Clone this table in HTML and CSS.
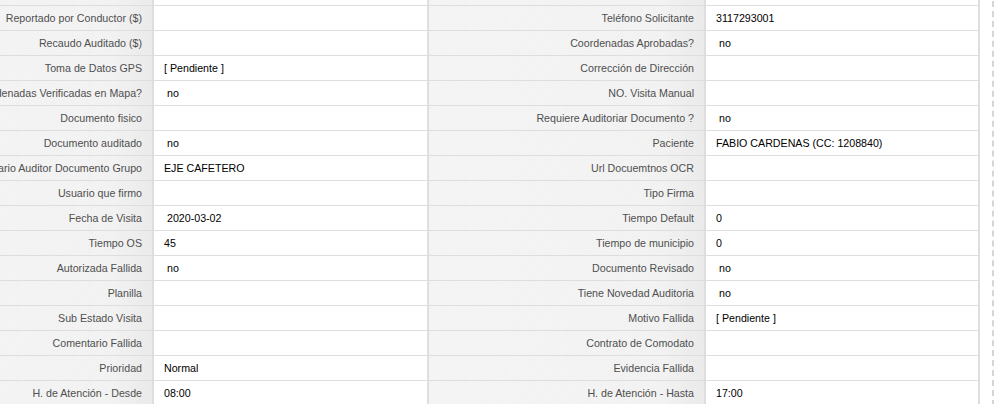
FILE: index.html
```html
<!DOCTYPE html>
<html lang="es">
<head>
<meta charset="utf-8">
<title>Detalle Visita</title>
<link rel="stylesheet" href="styles.css">
</head>
<body>
<div class="panel">
  <table class="detail">
    <colgroup>
      <col class="c1"><col class="c2"><col class="c3"><col class="c4">
    </colgroup>
    <tbody>
      <tr><td class="lbl"></td><td class="val"></td><td class="lbl"></td><td class="val"></td></tr>
      <tr><td class="lbl">Reportado por Conductor ($)</td><td class="val"></td><td class="lbl">Teléfono Solicitante</td><td class="val">3117293001</td></tr>
      <tr><td class="lbl">Recaudo Auditado ($)</td><td class="val"></td><td class="lbl">Coordenadas Aprobadas?</td><td class="val">&nbsp;no</td></tr>
      <tr><td class="lbl">Toma de Datos GPS</td><td class="val">[ Pendiente ]</td><td class="lbl">Corrección de Dirección</td><td class="val"></td></tr>
      <tr><td class="lbl">Coordenadas Verificadas en Mapa?</td><td class="val">&nbsp;no</td><td class="lbl">NO. Visita Manual</td><td class="val"></td></tr>
      <tr><td class="lbl">Documento fisico</td><td class="val"></td><td class="lbl">Requiere Auditoriar Documento ?</td><td class="val">&nbsp;no</td></tr>
      <tr><td class="lbl">Documento auditado</td><td class="val">&nbsp;no</td><td class="lbl">Paciente</td><td class="val">FABIO CARDENAS (CC: 1208840)</td></tr>
      <tr><td class="lbl">Usuario Auditor Documento Grupo</td><td class="val">EJE CAFETERO</td><td class="lbl">Url Docuemtnos OCR</td><td class="val"></td></tr>
      <tr><td class="lbl">Usuario que firmo</td><td class="val"></td><td class="lbl">Tipo Firma</td><td class="val"></td></tr>
      <tr><td class="lbl">Fecha de Visita</td><td class="val">&nbsp;2020-03-02</td><td class="lbl">Tiempo Default</td><td class="val">0</td></tr>
      <tr><td class="lbl">Tiempo OS</td><td class="val">45</td><td class="lbl">Tiempo de municipio</td><td class="val">0</td></tr>
      <tr><td class="lbl">Autorizada Fallida</td><td class="val">&nbsp;no</td><td class="lbl">Documento Revisado</td><td class="val">&nbsp;no</td></tr>
      <tr><td class="lbl">Planilla</td><td class="val"></td><td class="lbl">Tiene Novedad Auditoria</td><td class="val">&nbsp;no</td></tr>
      <tr><td class="lbl">Sub Estado Visita</td><td class="val"></td><td class="lbl">Motivo Fallida</td><td class="val">[ Pendiente ]</td></tr>
      <tr><td class="lbl">Comentario Fallida</td><td class="val"></td><td class="lbl">Contrato de Comodato</td><td class="val"></td></tr>
      <tr><td class="lbl">Prioridad</td><td class="val">Normal</td><td class="lbl">Evidencia Fallida</td><td class="val"></td></tr>
      <tr><td class="lbl">H. de Atención - Desde</td><td class="val">08:00</td><td class="lbl">H. de Atención - Hasta</td><td class="val">17:00</td></tr>
    </tbody>
  </table>
</div>
</body>
</html>
```

FILE: styles.css
```css
html, body {
  margin: 0;
  padding: 0;
  background: #fff;
  overflow: hidden;
}

body {
  font-family: "Liberation Sans", Arial, sans-serif;
  font-size: 8pt;
  color: #000;
}

.panel {
  margin-left: -121px;
  margin-top: -19px;
  width: 1101px;
  padding-right: 12px;
  border-right: 2px dashed #d6d6d6;
}

.detail {
  table-layout: fixed;
  width: 1101px;
  border-collapse: separate;
  border-spacing: 0;
}

.c1 { width: 275px; }
.c2 { width: 275px; }
.c3 { width: 277px; }
.c4 { width: 274px; }

.detail td {
  height: 24px;
  padding: 0;
  border-right: 2px solid #dedede;
  border-bottom: 1px solid #dedede;
  vertical-align: middle;
  white-space: nowrap;
  overflow: hidden;
}

.lbl {
  text-align: right;
  padding-right: 10px !important;
  color: #4f4f4f;
  background:
    repeating-linear-gradient(135deg, rgba(255,255,255,0) 0 2px, rgba(0,0,0,0.012) 2px 3px),
    linear-gradient(to right, #f5f5f5 0%, #f3f3f3 85%, #ebebeb 100%);
}

.val {
  text-align: left;
  padding-left: 10px !important;
  color: #000;
  background: #fff;
}
```
